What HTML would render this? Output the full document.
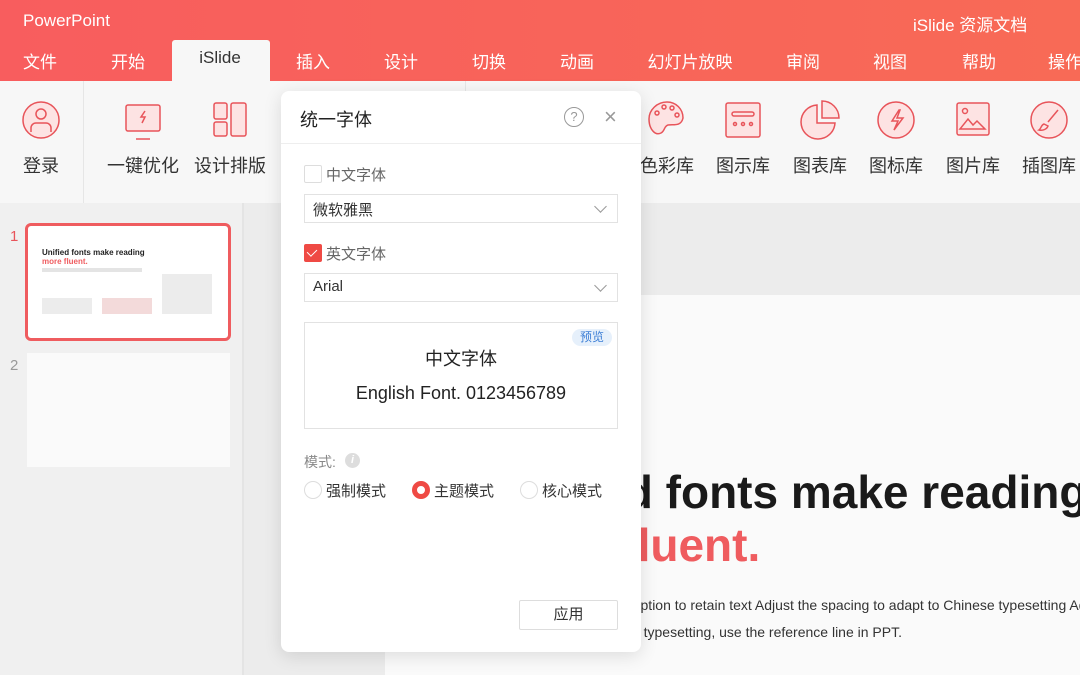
<!DOCTYPE html><html><head><meta charset="utf-8"><style>
*{margin:0;padding:0;box-sizing:border-box}
body{width:1080px;height:675px;overflow:hidden;position:relative;font-family:"Liberation Sans","Noto Sans CJK SC",sans-serif;background:#ececec}
.a{position:absolute}
.top{left:0;top:0;width:1080px;height:81px;background:linear-gradient(90deg,#f85d5e,#f86a56)}
.tab{position:absolute;top:48px;color:#fff;font-size:17px;transform:translateX(-50%);white-space:nowrap}
.rib{left:0;top:81px;width:1080px;height:122px;background:#f7f7f7}
.lbl{position:absolute;top:152px;font-size:18px;color:#333;transform:translateX(-50%);white-space:nowrap}
.dlg{left:281px;top:91px;width:360px;height:561px;background:#fff;border-radius:8px;box-shadow:0 4px 18px rgba(0,0,0,.12)}
.sel{position:absolute;left:23px;width:314px;height:29px;border:1px solid #e2e2e2;font-size:15px;color:#333;padding:4px 8px}
.chev{position:absolute;right:12px;top:7px;width:9px;height:9px;border-right:1.3px solid #999;border-bottom:1.3px solid #999;transform:rotate(45deg)}
.rad{position:absolute;top:390px;width:18px;height:18px;border-radius:50%;border:1px solid #ddd}
.rl{position:absolute;top:389px;font-size:15px;color:#333}
</style></head><body>
<div class="a top"></div>
<div class="a" style="left:23px;top:11px;color:#fff;font-size:17px">PowerPoint</div>
<div class="a" style="left:913px;top:11px;color:#fff;font-size:17px">iSlide 资源文档</div>
<div class="a" style="left:172px;top:40px;width:98px;height:42px;background:#f7f7f7;border-radius:3px 3px 0 0"></div>
<div class="tab" style="left:40px">文件</div><div class="tab" style="left:128px">开始</div>
<div class="tab" style="left:220px;color:#333">iSlide</div><div class="tab" style="left:313px">插入</div>
<div class="tab" style="left:401px">设计</div><div class="tab" style="left:489px">切换</div>
<div class="tab" style="left:577px">动画</div><div class="tab" style="left:690px">幻灯片放映</div>
<div class="tab" style="left:803px">审阅</div><div class="tab" style="left:890px">视图</div>
<div class="tab" style="left:979px">帮助</div><div class="tab" style="left:1065px">操作</div>
<div class="a rib"></div>
<div class="a" style="left:83px;top:81px;width:1px;height:122px;background:#e6e6e6"></div>
<div class="a" style="left:465px;top:81px;width:1px;height:122px;background:#e6e6e6"></div>
<svg class="a" style="left:0;top:81px" width="1080" height="122" fill="#fde3e3" stroke="#e8545a" stroke-width="1.5">
<circle cx="41" cy="39" r="18"/><circle cx="41" cy="33" r="5" fill="none"/><path d="M31 51v-4a5 5 0 0 1 5-5h10a5 5 0 0 1 5 5v4" fill="none"/>
<rect x="126" y="24" width="34" height="26" rx="2"/><path d="M136 58h14" fill="none"/><path d="M145 30l-4 6h4l-3 6" fill="none"/>
<rect x="214" y="22" width="13" height="16" rx="2"/><rect x="214" y="41" width="13" height="14" rx="2"/><rect x="231" y="22" width="15" height="33" rx="2"/>
<path d="M667 21c-10 0-18 8-18 17 0 10 6 17 12 14 4-2 3-7 7-8 5-1 13 2 15-7 0-9-7-16-16-16z"/><circle cx="657" cy="32" r="2" fill="none"/><circle cx="664" cy="26" r="2" fill="none"/><circle cx="672" cy="27" r="2" fill="none"/><circle cx="677" cy="34" r="2" fill="none"/>
<rect x="726" y="22" width="34" height="34" rx="2"/><rect x="732" y="31" width="22" height="4" rx="2" fill="none"/><circle cx="735" cy="43" r="1.5" fill="none"/><circle cx="743" cy="43" r="1.5" fill="none"/><circle cx="751" cy="43" r="1.5" fill="none"/>
<path d="M817 24a17 17 0 1 0 18 18h-18z"/><path d="M822 20v17h17a17 17 0 0 0-17-17z"/>
<circle cx="896" cy="39" r="18"/><path d="M899 29l-7 11h6l-4 9 9-12h-6l3-8z" fill="none"/>
<rect x="957" y="22" width="32" height="32" rx="2"/><circle cx="965" cy="30" r="2.5" fill="none"/><path d="M960 48l8-10 5 6 4-4 8 8z" fill="none"/>
<circle cx="1049" cy="39" r="18"/><path d="M1058 29l-10 12M1044 43c-3 1-3 5-5 6 4 1 8-1 9-4z" fill="none"/>
</svg>
<div class="lbl" style="left:41px">登录</div><div class="lbl" style="left:143px">一键优化</div><div class="lbl" style="left:230px">设计排版</div>
<div class="lbl" style="left:667px">色彩库</div><div class="lbl" style="left:743px">图示库</div><div class="lbl" style="left:820px">图表库</div>
<div class="lbl" style="left:896px">图标库</div><div class="lbl" style="left:973px">图片库</div><div class="lbl" style="left:1049px">插图库</div>
<div class="a" style="left:0;top:203px;width:244px;height:472px;background:#f0f0f0;border-right:2px solid #e4e4e4"></div>
<div class="a" style="left:10px;top:228px;color:#e8545a;font-size:15px">1</div>
<div class="a" style="left:10px;top:357px;color:#999;font-size:15px">2</div>
<div class="a" style="left:25px;top:223px;width:206px;height:118px;border:3px solid #ef5c5f;border-radius:6px;background:#fff"></div>
<div class="a" style="left:42px;top:248px;font-size:8px;font-weight:bold;color:#222;line-height:9px">Unified fonts make reading<br><span style="color:#ef5c5f">more fluent.</span></div>
<div class="a" style="left:42px;top:268px;width:100px;height:4px;background:#e4e4e4"></div>
<div class="a" style="left:42px;top:298px;width:50px;height:16px;background:#ececec"></div>
<div class="a" style="left:102px;top:298px;width:50px;height:16px;background:#f3dada"></div>
<div class="a" style="left:162px;top:274px;width:50px;height:40px;background:#ececec"></div>
<div class="a" style="left:27px;top:353px;width:203px;height:114px;background:#fafafa"></div>
<div class="a" style="left:385px;top:295px;width:695px;height:380px;background:#fafafa"></div>
<div class="a" style="left:497px;top:466px;font-size:46px;font-weight:bold;color:#1a1a1a;white-space:nowrap;line-height:53px">Unified fonts make reading<br><span style="color:#ef5c5f">more fluent.</span></div>
<div class="a" style="left:530px;top:592px;font-size:14px;color:#333;white-space:nowrap;line-height:27px">Choose the font option to retain text Adjust the spacing to adapt to Chinese typesetting Ad<br>Adjust to Chinese typesetting, use the reference line in PPT.</div>
<div class="a dlg">
<div class="a" style="left:19px;top:15px;font-size:18px;color:#222">统一字体</div>
<div class="a" style="left:283px;top:16px;width:20px;height:20px;border:1.3px solid #999;border-radius:50%;font-size:13px;color:#999;text-align:center;line-height:18px">?</div>
<div class="a" style="left:323px;top:13px;font-size:22px;color:#999;font-weight:300">×</div>
<div class="a" style="left:0;top:52px;width:360px;height:1px;background:#eee"></div>
<div class="a" style="left:23px;top:74px;width:18px;height:18px;border:1px solid #ddd;border-radius:2px"></div>
<div class="a" style="left:45px;top:73px;font-size:15px;color:#666">中文字体</div>
<div class="sel" style="top:103px">微软雅黑<i class="chev"></i></div>
<div class="a" style="left:23px;top:153px;width:18px;height:18px;background:#ef4a44;border-radius:2px"><div style="position:absolute;left:5px;top:3px;width:6px;height:9px;border-right:1.5px solid #fff;border-bottom:1.5px solid #fff;transform:rotate(45deg)"></div></div>
<div class="a" style="left:45px;top:152px;font-size:15px;color:#666">英文字体</div>
<div class="sel" style="top:182px">Arial<i class="chev"></i></div>
<div class="a" style="left:23px;top:231px;width:314px;height:107px;border:1px solid #e2e2e2"></div>
<div class="a" style="left:291px;top:238px;width:40px;height:17px;border-radius:9px;background:#e6f0fb;color:#3d7fd6;font-size:12px;text-align:center;line-height:17px">预览</div>
<div class="a" style="left:23px;top:254px;width:314px;text-align:center;font-size:18px;color:#222">中文字体</div>
<div class="a" style="left:23px;top:292px;width:314px;text-align:center;font-size:18px;color:#222">English Font. 0123456789</div>
<div class="a" style="left:23px;top:361px;font-size:14px;color:#888">模式:</div>
<div class="a" style="left:64px;top:362px;width:15px;height:15px;border-radius:50%;background:#ddd;color:#fff;font-size:11px;text-align:center;line-height:15px;font-style:italic;font-weight:bold">i</div>
<div class="rad" style="left:23px"></div><div class="rl" style="left:45px">强制模式</div>
<div class="rad" style="left:131px;border:5px solid #ef4a44"></div><div class="rl" style="left:153px">主题模式</div>
<div class="rad" style="left:239px"></div><div class="rl" style="left:261px">核心模式</div>
<div class="a" style="left:238px;top:509px;width:99px;height:30px;border:1px solid #ddd;border-radius:2px;font-size:15px;color:#333;text-align:center;line-height:28px">应用</div>
</div>
</body></html>
